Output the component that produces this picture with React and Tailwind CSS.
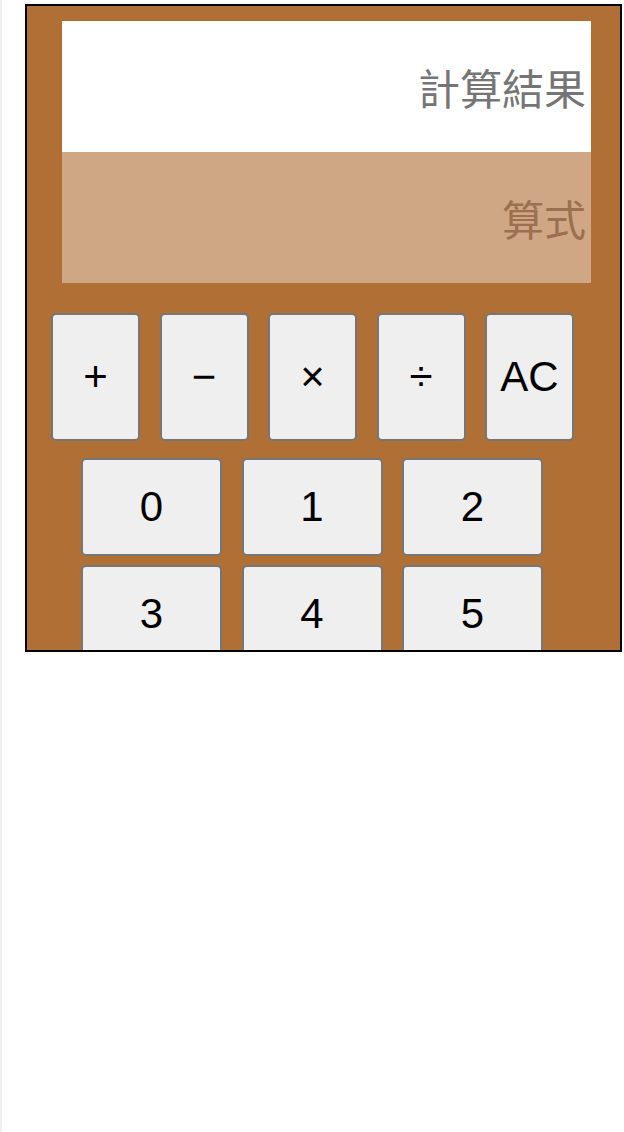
import React from "react";

const btn =
  "flex items-center justify-center bg-[#efefef] border-2 border-[#767676] rounded-[5px] text-black text-[42px] leading-none font-['Liberation_Sans',Arial,sans-serif]";

export default function App() {
  const ops = ["+", "\u2212", "\u00d7", "\u00f7", "AC"];
  const rows = [
    ["0", "1", "2"],
    ["3", "4", "5"],
  ];
  return (
    <div className="min-h-[1132px] w-[624px] bg-white border-l-2 border-[#f0f0f0] pt-[4px]">
      <div className="ml-[23px] w-[597px] h-[648px] border-2 border-black bg-[#b07035] overflow-hidden">
        <div className="ml-[35px] mt-[15px] w-[529px]">
          <div className="h-[131px] bg-white flex items-center justify-end pr-[5px] text-[42px] text-[#757575] font-['Noto_Sans_CJK_TC','Noto_Sans_CJK_SC',sans-serif]">
            計算結果
          </div>
          <div className="h-[131px] bg-[#cfa784] flex items-center justify-end pr-[5px] text-[42px] text-[#9a7150] font-['Noto_Sans_CJK_TC','Noto_Sans_CJK_SC',sans-serif]">
            算式
          </div>
        </div>
        <div className="ml-[24px] mt-[30px] flex gap-[19.5px]">
          {ops.map((o) => (
            <div key={o} className={btn + " w-[89px] h-[128px]"}>
              {o}
            </div>
          ))}
        </div>
        <div className="ml-[54px] mt-[17px] flex flex-col gap-[9px]">
          {rows.map((r, i) => (
            <div key={i} className="flex gap-[19.5px]">
              {r.map((d) => (
                <div key={d} className={btn + " w-[141px] h-[98px]"}>
                  {d}
                </div>
              ))}
            </div>
          ))}
        </div>
      </div>
    </div>
  );
}
